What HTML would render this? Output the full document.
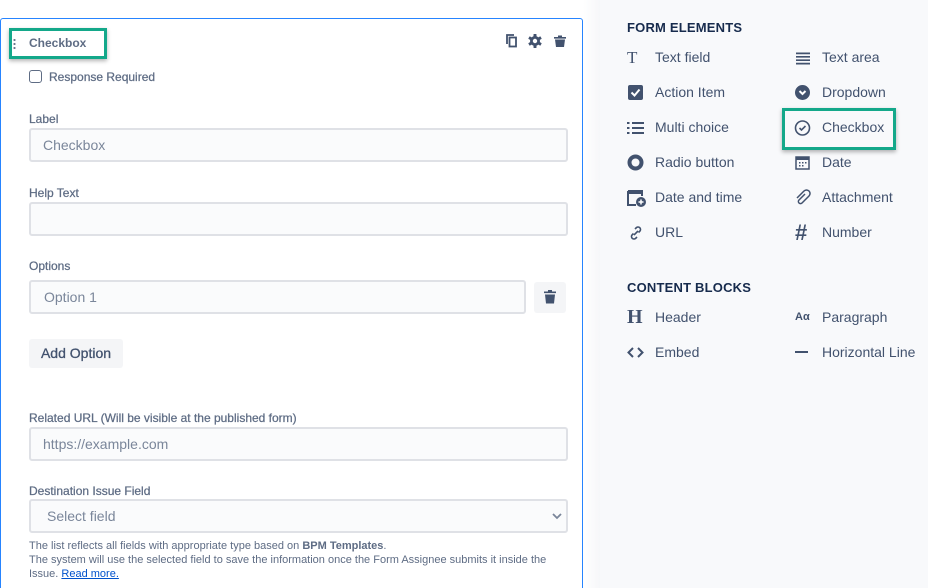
<!DOCTYPE html>
<html style="overflow:hidden;width:928px;height:588px"><head><style>
*{box-sizing:border-box;margin:0;padding:0}
body{width:928px;height:588px;overflow:hidden;background:#fff;font-family:"Liberation Sans",sans-serif;position:relative;color:#42526e}
.card{position:absolute;left:0;top:18px;width:583px;height:580px;border:1px solid #2684ff;border-radius:3px;background:#fff}
.side{position:absolute;left:600px;top:0;width:328px;height:588px;background:#f8f9fb}
.shadow{position:absolute;left:583px;top:0;width:17px;height:588px;background:linear-gradient(90deg,#fff,#f6f7f9)}
.a{position:absolute}
.lbl{position:absolute;left:29px;font-size:12px;color:#5e6c84;-webkit-text-stroke:.25px #5e6c84}
.inp{position:absolute;left:29px;width:539px;height:34px;border:2px solid #dfe1e6;border-radius:3px;background:#fafbfc;font-size:14px;color:#7a869a;padding:0 12px;line-height:30px}
.h{position:absolute;left:627px;font-size:13px;color:#172b4d;font-weight:bold;letter-spacing:.2px}
.it{position:absolute;font-size:14px;color:#42526e}
.ic{position:absolute;width:18px;height:18px}
</style></head><body>
<div class="card"></div>
<div class="shadow"></div>
<div class="side"></div>
<div class="a" style="left:9px;top:28px;width:98px;height:31px;border:3px solid #14a88a;box-shadow:0 2px 4px rgba(0,0,0,.3)"></div>
<div class="a" style="left:13px;top:38px;width:3px;height:11px;background:radial-gradient(circle,#6b778c 1px,transparent 1.2px) 0 0/3px 4px"></div>
<div class="a" style="left:29px;top:36px;font-size:12px;font-weight:bold;color:#5e6c84">Checkbox</div>
<svg class="a" style="left:504px;top:32px" width="64" height="18" viewBox="0 0 64 18">
<g fill="none" stroke="#42526e" stroke-width="1.8"><path d="M3 12V3h7"/><rect x="5.5" y="5.5" width="6.5" height="9"/></g>
<g transform="translate(31 9)" fill="#42526e"><rect x="-1.5" y="-7" width="3" height="14" rx=".5"/><rect x="-1.5" y="-7" width="3" height="14" rx=".5" transform="rotate(60)"/><rect x="-1.5" y="-7" width="3" height="14" rx=".5" transform="rotate(120)"/><circle r="5"/><circle r="2.2" fill="#fff"/></g>
<path d="M50 5h12v1.6H50z M51 7.5h10l-1 7.5h-8z" fill="#42526e"/><path d="M54 3.5h4v1.5h-4z" fill="#42526e"/>
</svg>
<div class="a" style="left:29px;top:70px;width:13px;height:13px;border:1.5px solid #5e6c84;border-radius:3px"></div>
<div class="a" style="left:49px;top:70px;font-size:12px;color:#5e6c84;-webkit-text-stroke:.25px #5e6c84">Response Required</div>
<div class="lbl" style="top:112px">Label</div>
<div class="inp" style="top:128px">Checkbox</div>
<div class="lbl" style="top:186px">Help Text</div>
<div class="inp" style="top:202px"></div>
<div class="lbl" style="top:259px">Options</div>
<div class="inp" style="top:280px;width:497px;padding-left:13px">Option 1</div>
<div class="a" style="left:534px;top:282px;width:32px;height:31px;background:#f4f5f7;border-radius:3px"></div>
<svg class="a" style="left:543px;top:290px" width="14" height="15"><path d="M1 1.5h12v1.6H1zM2 4.5h10l-1 9H3z M5 0h4v1.5H5z" fill="#42526e"/></svg>
<div class="a" style="left:29px;top:339px;width:94px;height:29px;background:#f4f5f7;border-radius:3px;font-size:14px;line-height:29px;text-align:center;color:#42526e;-webkit-text-stroke:.3px #42526e">Add Option</div>
<div class="lbl" style="top:411px">Related URL (Will be visible at the published form)</div>
<div class="inp" style="top:427px">https://example.com</div>
<div class="lbl" style="top:484px">Destination Issue Field</div>
<div class="inp" style="top:499px;padding-left:16px">Select field</div>
<svg class="a" style="left:551px;top:512px" width="12" height="8"><path d="M2 2l4 4 4-4" fill="none" stroke="#7a869a" stroke-width="1.8"/></svg>
<div class="a" style="left:29px;top:539px;font-size:11px;line-height:14px;color:#5e6c84;width:530px">The list reflects all fields with appropriate type based on <b>BPM Templates</b>.<br>The system will use the selected field to save the information once the Form Assignee submits it inside the Issue. <span style="color:#0052cc;text-decoration:underline">Read more.</span></div>

<div class="h" style="top:20px">FORM ELEMENTS</div>
<div class="it" style="left:627px;top:48px;font-family:'Liberation Serif',serif;font-size:17px">T</div><div class="it" style="left:655px;top:49px">Text field</div>
<svg class="ic" style="left:794px;top:50px" viewBox="0 0 18 18"><path d="M2 3h14v2H2zM2 7h14v2H2zM2 11h14v2H2zM2 15h14v2H2z" fill="#42526e" transform="scale(1 .85)"/></svg><div class="it" style="left:822px;top:49px">Text area</div>
<svg class="ic" style="left:627px;top:84px" viewBox="0 0 18 18"><rect x="1" y="1" width="15" height="15" rx="2" fill="#42526e"/><path d="M4.5 8.5l3 3 5-6" fill="none" stroke="#fff" stroke-width="2"/></svg><div class="it" style="left:655px;top:84px">Action Item</div>
<svg class="ic" style="left:794px;top:84px" viewBox="0 0 18 18"><circle cx="8.5" cy="8.5" r="7.5" fill="#42526e"/><path d="M5.5 7l3 3 3-3" fill="none" stroke="#fff" stroke-width="2"/></svg><div class="it" style="left:822px;top:84px">Dropdown</div>
<svg class="ic" style="left:627px;top:119px" viewBox="0 0 18 18"><g fill="#42526e"><rect x="0" y="3" width="2.5" height="2"/><rect x="0" y="8" width="2.5" height="2"/><rect x="0" y="13" width="2.5" height="2"/><rect x="5" y="3" width="12" height="2"/><rect x="5" y="8" width="12" height="2"/><rect x="5" y="13" width="12" height="2"/></g></svg><div class="it" style="left:655px;top:119px">Multi choice</div>
<svg class="ic" style="left:794px;top:119px" viewBox="0 0 18 18"><circle cx="8.5" cy="9" r="7" fill="none" stroke="#42526e" stroke-width="1.6"/><path d="M5.5 9l2 2 4-4" fill="none" stroke="#42526e" stroke-width="1.6"/></svg><div class="it" style="left:822px;top:119px">Checkbox</div>
<div class="a" style="left:782px;top:108px;width:114px;height:42px;border:3px solid #14a88a;box-shadow:0 2px 4px rgba(0,0,0,.3)"></div>
<svg class="ic" style="left:627px;top:154px" viewBox="0 0 18 18"><circle cx="8.5" cy="8.5" r="6" fill="none" stroke="#42526e" stroke-width="4"/></svg><div class="it" style="left:655px;top:154px">Radio button</div>
<svg class="ic" style="left:794px;top:154px" viewBox="0 0 18 18"><rect x="2" y="3" width="13" height="12" fill="none" stroke="#42526e" stroke-width="1.5"/><path d="M2 3h13v3H2z" fill="#42526e"/><g fill="#42526e"><rect x="5" y="8" width="1.5" height="1.5"/><rect x="8" y="8" width="1.5" height="1.5"/><rect x="11" y="8" width="1.5" height="1.5"/><rect x="5" y="11" width="1.5" height="1.5"/><rect x="8" y="11" width="1.5" height="1.5"/></g></svg><div class="it" style="left:822px;top:154px">Date</div>
<svg class="ic" style="left:627px;top:188px;width:20px;height:20px" viewBox="0 0 20 20"><path d="M1 3h14v5M1 3v14h8" fill="none" stroke="#42526e" stroke-width="2"/><path d="M1 3h14v3H1z" fill="#42526e"/><circle cx="14" cy="14" r="5" fill="#42526e"/><path d="M14 11.5v5M11.5 14h5" stroke="#fff" stroke-width="1.5"/></svg><div class="it" style="left:655px;top:189px">Date and time</div>
<svg class="ic" style="left:794px;top:189px" viewBox="0 0 18 18"><path d="M11 5l-6 6a2 2 0 003 3l7-7a3.5 3.5 0 00-5-5l-7 7" fill="none" stroke="#42526e" stroke-width="1.5"/></svg><div class="it" style="left:822px;top:189px">Attachment</div>
<svg class="ic" style="left:627px;top:224px" viewBox="0 0 18 18"><g fill="none" stroke="#42526e" stroke-width="1.6"><path d="M7 11l4-4"/><path d="M8 5l1.5-1.5a2.5 2.5 0 013.5 3.5L11.5 8.5M6.5 9.5L5 11a2.5 2.5 0 003.5 3.5L10 13"/></g></svg><div class="it" style="left:655px;top:224px">URL</div>
<div class="it" style="left:795px;top:220px;font-size:22px;font-weight:bold">#</div><div class="it" style="left:822px;top:224px">Number</div>
<div class="h" style="top:280px">CONTENT BLOCKS</div>
<div class="it" style="left:627px;top:306px;font-family:'Liberation Serif',serif;font-size:20px;font-weight:bold">H</div><div class="it" style="left:655px;top:309px">Header</div>
<div class="it" style="left:795px;top:311px;font-size:11px;font-weight:bold">Aα</div><div class="it" style="left:822px;top:309px">Paragraph</div>
<svg class="ic" style="left:627px;top:344px" viewBox="0 0 18 18"><path d="M6 4L1.5 8.5 6 13M11 4l4.5 4.5L11 13" fill="none" stroke="#42526e" stroke-width="2"/></svg><div class="it" style="left:655px;top:344px">Embed</div>
<div class="a" style="left:795px;top:351px;width:13px;height:2px;background:#42526e"></div><div class="it" style="left:822px;top:344px">Horizontal Line</div>
</body></html>
